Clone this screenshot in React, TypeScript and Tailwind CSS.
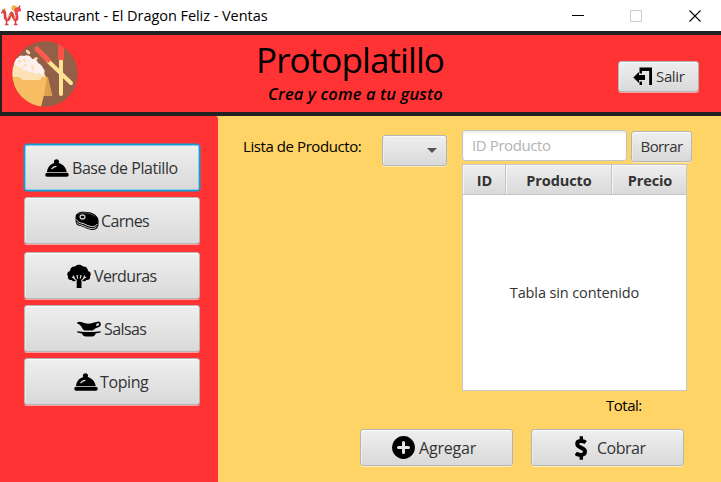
import type { ReactNode } from "react";

const face =
  "flex items-center rounded-[3px] border border-[#b5b5b5] bg-linear-to-b from-[#efefef] to-[#d9d9d9] text-[#333] shadow-[inset_0_1px_0_#fbfbfb,inset_1px_0_0_#ececec,0_1px_0_rgba(255,255,255,0.55)] whitespace-nowrap";

function Button({ className, children }: { className: string; children?: ReactNode }) {
  return <button className={`${face} ${className}`}>{children}</button>;
}

function DragonIcon() {
  return (
    <svg className="ml-px" width="21" height="21" viewBox="0 0 21 21" fill="none">
      <path d="M10 3l2-3 3 1 2 2-1 4-4-1zM1 5l3-2 1 3-3 2z" fill="#f5b24a" />
      <path d="M1.500 6c2 0 2.500 2 2.500 4 0 3 .5 5 2.500 5 2.500 0 2-6 4-7 1.500 0 1.500 7 4 7 2.500 0 1.500-5 .5-8" stroke="#d8434b" strokeWidth="2.800" />
      <path d="M5.500 15l4-6M12.500 15l2.500-5" stroke="#f0a94c" strokeWidth="1" />
      <path d="M14 3l4-1 2 2v2l-3 1-1 2-3-3z" fill="#ee4a50" />
      <path d="M4 19.500h3.500M13 19.500h3.500M5.500 16v3M14.500 16v3M18 3l1-2.500M0 8l2-1" stroke="#d8434b" strokeWidth="1.500" />
    </svg>
  );
}

function FoodLogo() {
  return (
    <svg width="66" height="66" viewBox="0 0 66 66">
      <defs>
        <clipPath id="plate"><circle cx="33" cy="33" r="32.700" /></clipPath>
      </defs>
      <g clipPath="url(#plate)">
        <rect width="66" height="66" fill="#925f47" />
        <path d="M33 36h3l4.500 19h-9z" fill="#dda04f" />
        <path d="M0 36h35l-3 18-3 12H0z" fill="#f7bd63" />
        <path d="M0 25l4-5 26 8 4 8h-4l-2 3H11l-4-3H0z" fill="#fde2b5" />
        <path d="M2 20c1-2 2-3 4-3 1-3 4-3 6-2 3-2 7 0 8 3 4 0 5 1 6 4 3 1 4 3 5 5 2 2 2 4 1 6-2 1-4 0-5-1-3 1-5 1-6-1-3 1-5 0-6-2-3 1-5-1-5-3-3 1-5 0-6-2-2 0-2-2-2-4z" fill="#fdf0f0" />
        <path d="M15 10l2 2M23 18l1.500-.5M7 21l1-1M12 25l2-1M20 25l1 3M12 19l1 1" stroke="#fde0b5" strokeWidth="2.500" strokeLinecap="round" />
        <path d="M36 20l23 22" stroke="#fee294" strokeWidth="4" strokeLinecap="round" />
        <path d="M25 8l11 11" stroke="#ff5b4d" strokeWidth="5" strokeLinecap="round" />
        <path d="M49 20v33" stroke="#fee294" strokeWidth="4" strokeLinecap="round" />
        <path d="M49 2.500V19" stroke="#f95347" strokeWidth="6" />
      </g>
    </svg>
  );
}

function ExitIcon() {
  return (
    <svg width="20" height="19" viewBox="0 0 20 19">
      <path d="M6.500 0.500H19V18h-2.800V4H9v2.500H6.500zM6.500 14.500H9V18H6.500z" />
      <path d="M0.300 10.500L6 5v3h6v5H6v3z" />
    </svg>
  );
}

function ClocheIcon() {
  return (
    <svg width="24" height="18" viewBox="0 0 24 18">
      <path d="M2 13C2.500 8 5.500 5 9.300 4c-.8-1-.5-3.500 2.200-3.700 2.700.2 3 2.700 2.200 3.700C17.500 5 21 8 21.700 13z" />
      <path d="M7 9.600c1-1.300 2-1.900 4-2.200" stroke="#ddd" strokeWidth="1.400" fill="none" strokeLinecap="round" />
      <rect x="0.300" y="13.700" width="23.400" height="4" rx="1.800" />
    </svg>
  );
}

function SteakIcon() {
  return (
    <svg width="24" height="20" viewBox="0 0 24 20">
      <path d="M.5 6C.5 2.500 4 .5 9 .7 17 .7 23 4 23.500 9v5c-.5 3.500-3 5.300-7 5C11 18 9 15.500 5 15 2 14.600.8 13 .6 10z" />
      <path d="M1.700 8.500C3 12.500 7 11.500 11 13.700c5 2.600 9 2.600 11.400-.7" fill="none" stroke="#e5e5e5" strokeWidth="1" />
      <path d="M1.700 11.500C4 14.300 7 13.500 11 15.900c4.500 2.400 9 2.300 11-.6" fill="none" stroke="#e5e5e5" strokeWidth=".9" />
      <ellipse cx="7.500" cy="6" rx="2.400" ry="2" fill="none" stroke="#ccc" strokeWidth="1.300" />
      <path d="M3 3c4-2 13-1.500 17 2.500" fill="none" stroke="#888" strokeWidth=".6" />
    </svg>
  );
}

function BroccoliIcon() {
  return (
    <svg width="24" height="24" viewBox="0 0 24 24">
      <path d="M4.500 16C2 16.500.5 14.500 1 12.500-.5 10 .5 7.500 3 7 3 4 5.500 2 8 2.500c2-2.500 6-2.500 8 0C18.500 2 21 4 21 7c2.500.5 3.500 3 2 5.500.5 2-1 4-3.500 3.500-1.500 2-4 1.500-5 0V24H9.700v-8c-1.200 1.500-3.700 2-5.200 0z" />
      <path d="M6.500 11.500c.5 3 1.500 4.500 3.300 5M17.500 11.500c-.5 3-1.500 4.500-3.300 5M10 11l.7 3.500M14 11l-.7 3.500M7 14l-2-1M17 14l2-1" fill="none" stroke="#e6e6e6" strokeWidth="1.200" />
    </svg>
  );
}

function SauceIcon() {
  return (
    <svg width="24" height="16" viewBox="0 0 24 16">
      <path d="M.3 1.300C3 0 5 1.300 8 2.300c4 .8 6 .2 10.500-1.300L19.500 5c-1 3-3 4-4 4.500H7.500C4.500 8 5 4 .3 2.800z" />
      <path d="M18 4c1-3 5-3.500 5-.8 0 2.300-3 2.600-5.500 3.600" fill="none" stroke="#000" strokeWidth="1.700" />
      <path d="M.3 10.300c4 1 19 1 23.400 0v1.300c-2 .5-4 .7-5 .9-.5 2-2 3-3.500 3H9c-2 0-3.500-1-4-3-2-.2-3-.4-4.700-.9z" />
    </svg>
  );
}

function PlusIcon() {
  return (
    <svg width="23" height="23" viewBox="0 0 23 23">
      <circle cx="11.500" cy="11.500" r="11.400" />
      <path d="M11.500 6.500v10M6.500 11.500h10" stroke="#e5e5e5" strokeWidth="3" strokeLinecap="round" />
    </svg>
  );
}

function DollarIcon() {
  return (
    <svg width="12" height="24" viewBox="0 0 12 24" fill="none" stroke="#000">
      <path d="M10.700 6.500C8.500 4.800 2.200 3.900 2.200 8c0 4 7.800 3.300 7.800 7.600 0 4.400-6.700 3.800-9.300 1.800" strokeWidth="4" />
      <path d="M6.300.3v4.500M6.300 18.500v5.200" strokeWidth="3.400" />
    </svg>
  );
}

const menu = [
  { label: "Base de Platillo", icon: <ClocheIcon />, box: "h-[47px] pl-5 mb-[6px] border-[#0e9fd8]! shadow-[inset_0_0_0_1px_#8fc9e2,0_0_0_0.5px_#0e9fd8]!", text: "ml-[3px] tracking-[-0.45px]" },
  { label: "Carnes", icon: <SteakIcon />, box: "h-[47px] pl-[50px] mb-[8px]", text: "ml-[2px] tracking-[-0.65px]" },
  { label: "Verduras", icon: <BroccoliIcon />, box: "h-[47px] pl-[42px] mb-[6px]", text: "ml-[3px] tracking-[-0.65px]" },
  { label: "Salsas", icon: <SauceIcon />, box: "h-[47px] pl-[52px] mb-[6px]", text: "ml-[3px] tracking-[-0.6px]" },
  { label: "Toping", icon: <ClocheIcon />, box: "h-[47px] pl-[49px]", text: "ml-[2px] tracking-[-0.4px]" },
];

export default function App() {
  return (
    <div className="flex h-[482px] w-[721px] flex-col overflow-hidden bg-white font-['Open_Sans','Noto_Sans',sans-serif] text-[15px]">
      <div className="flex h-[31px] shrink-0 items-center bg-white text-black">
        <DragonIcon />
        <span className="ml-[4px] whitespace-nowrap text-[14.5px] tracking-[-0.05px]">Restaurant - El Dragon Feliz - Ventas</span>
        <svg className="ml-auto mr-[13px]" width="136" height="14" viewBox="0 0 136 14" fill="none">
          <path d="M0 6.500h12" stroke="#000" />
          <rect x="58.500" y="1.500" width="11" height="11" stroke="#ccc" />
          <path d="M117.500 1.500l11 11M128.500 1.500l-11 11" stroke="#000" strokeWidth="1.100" />
        </svg>
      </div>

      <header className="flex h-[85px] shrink-0 border-y-4 border-l-2 border-[#222] bg-[#ff3333]">
        <div className="ml-[10px] mt-[6px] w-[244px]"><FoodLogo /></div>
        <div className="w-[362px] text-black">
          <h1 className="mt-[3px] h-[45px] whitespace-nowrap text-[35px] leading-[44px] tracking-[-0.9px]">Protoplatillo</h1>
          <p className="ml-[12px] whitespace-nowrap text-[16.5px] font-semibold italic leading-[22px] tracking-[0.13px]">Crea y come a tu gusto</p>
        </div>
        <Button className="mt-[26px] h-[31px] w-[81px] pl-[14px]">
          <ExitIcon />
          <span className="ml-[3px] tracking-[-0.35px]">Salir</span>
        </Button>
      </header>

      <div className="flex min-h-0 flex-1 bg-[#ffd466]">
        <nav className="w-[218px] rounded-tr-[3px] bg-[#ff3333] pl-6 pt-7">
          {menu.map((m) => (
            <Button key={m.label} className={`w-[176px] text-[16px] ${m.box}`}>
              {m.icon}
              <span className={m.text}>{m.label}</span>
            </Button>
          ))}
        </nav>

        <main className="flex flex-1 flex-col">
          <div className="flex h-[275px]">
            <span className="ml-[25px] mt-[19px] w-[139px] whitespace-nowrap leading-[22px] tracking-[-0.42px] text-black">Lista de Producto:</span>
            <Button className="mt-[19px] h-[31px] w-[65px] pl-[44px]">
              <svg width="10" height="5" viewBox="0 0 10 5"><path d="M0 0h10L5 5z" fill="#555" /></svg>
            </Button>
            <div className="ml-[15px] flex w-[230px] flex-col">
              <div className="flex h-12">
                <input
                  className="mt-[14px] h-[31px] w-[165px] rounded-[3px] border border-[#c4c4c4] bg-white pb-[2px] pl-[9px] tracking-[-0.4px] shadow-[inset_0_2px_2px_#eee] placeholder:text-[#b3b3b3]"
                  placeholder="ID Producto"
                />
                <Button className="ml-1 mt-[15px] h-[31px] w-[61px] justify-center"><span className="tracking-[-0.6px]">Borrar</span></Button>
              </div>
              <div className="flex h-[227px] w-[225px] flex-col border border-[#c8c8c8] bg-white text-[#333]">
                <div className="flex h-[30px] shrink-0 border-b border-[#c4c4c4] bg-linear-to-b from-[#efefef] to-[#d9d9d9] text-[14.5px] font-bold leading-[31px] tracking-[-0.1px]">
                  <span className="w-[43px] border-r border-[#c4c4c4] pl-px text-center shadow-[inset_1px_1px_0_#f7f7f7]">ID</span>
                  <span className="w-[106px] border-r border-[#c4c4c4] pl-px text-center shadow-[inset_1px_1px_0_#f7f7f7]">Producto</span>
                  <span className="flex-1 pl-[2px] text-center shadow-[inset_1px_1px_0_#f7f7f7]">Precio</span>
                </div>
                <div className="flex flex-1 items-center justify-center text-[14.5px] tracking-[-0.12px]">Tabla sin contenido</div>
              </div>
            </div>
          </div>
          <div className="ml-[388px] h-[38px] pt-[3px] leading-[22px] tracking-[-0.5px] text-black">Total:</div>
          <div className="ml-[142px] flex gap-[18px] text-[16px]">
            <Button className="h-[37px] w-[153px] pl-[31px]"><PlusIcon /><span className="ml-1 tracking-[-0.2px]">Agregar</span></Button>
            <Button className="h-[37px] w-[153px] pl-[43px]"><DollarIcon /><span className="ml-[10px] tracking-[-0.5px]">Cobrar</span></Button>
          </div>
        </main>
      </div>
    </div>
  );
}
